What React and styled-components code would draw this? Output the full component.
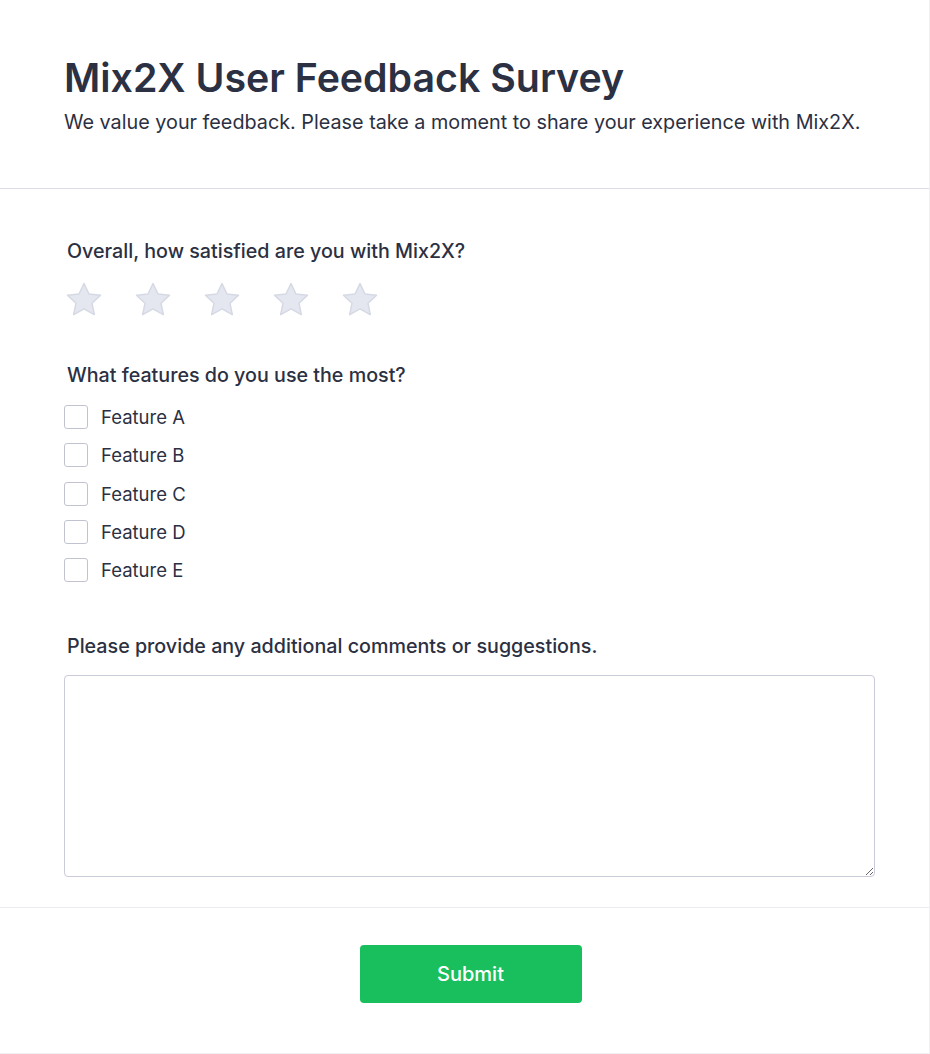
import React from 'react';
import styled, { createGlobalStyle } from 'styled-components';

const GlobalStyle = createGlobalStyle`
	* { box-sizing: border-box; }
	body {
		margin: 0;
		background: #ffffff;
		font-family: Inter, "Noto Sans", sans-serif;
		color: #2b3042;
	}
`;

const Card = styled.div`
	width: 930px;
	min-height: 1054px;
	background: #fff;
	border-right: 1px solid #f0f0f3;
	border-bottom: 1px solid #f0f0f3;
`;

const Header = styled.header`
	padding: 56px 40px 52px 64px;
	border-bottom: 1px solid #dcdde8;
`;

const Title = styled.h1`
	margin: 0;
	font-size: 39.3px;
	line-height: 44px;
	font-weight: 600;
	color: #2b3042;
`;

const Subtitle = styled.p`
	margin: 8px 0 0;
	font-size: 19.8px;
	line-height: 28px;
	white-space: nowrap;
	color: #2b3042;
`;

const Main = styled.main`
	padding: 48px 55px 30px 64px;
	border-bottom: 1px solid #ebebf0;
`;

const Question = styled.h2`
	margin: 0 0 ${(p) => p.gap || 16}px;
	padding-left: 3px;
	font-size: 19.7px;
	line-height: 28px;
	font-weight: 450;
	color: #2b3042;
`;

const Block = styled.section`
	margin-bottom: ${(p) => p.gap || 0}px;
`;

const Stars = styled.div`
	display: flex;
	gap: 29px;
	height: 40px;
	align-items: center;
`;

const StarButton = styled.button`
	border: none;
	background: none;
	padding: 0;
	width: 40px;
	height: 40px;
	cursor: pointer;
	display: flex;
	align-items: center;
	justify-content: center;
`;

const Options = styled.div`
	display: flex;
	flex-direction: column;
	gap: 14.3px;
`;

const Option = styled.label`
	display: flex;
	align-items: center;
	gap: 13px;
	height: 24px;
	font-size: 18.5px;
	color: #2b3042;
	cursor: pointer;
`;

const Box = styled.input`
	appearance: none;
	margin: 0;
	width: 24px;
	height: 24px;
	border: 1px solid #c1c4d0;
	border-radius: 3px;
	background: #fff;
`;

const Comments = styled.textarea`
	display: block;
	width: 811px;
	height: 202px;
	border: 1px solid #c9ccd8;
	border-radius: 4px;
	padding: 10px;
	font-family: inherit;
	font-size: 16px;
	resize: vertical;
`;

const Footer = styled.footer`
	display: flex;
	justify-content: center;
	padding: 37px 0 50px 12px;
`;

const Submit = styled.button`
	width: 222px;
	height: 58px;
	border: none;
	border-radius: 4px;
	background: #19be5d;
	color: #fff;
	font-family: inherit;
	font-size: 20px;
	font-weight: 500;
	cursor: pointer;
`;

const Star = () => (
	<svg width="40" height="40" viewBox="0 0 40 40">
		<polygon
			points="20,3.5 25,14 36.5,15.3 28,23.2 30.3,34.6 20,28.8 9.7,34.6 12,23.2 3.5,15.3 15,14"
			fill="#e4e7f0"
			stroke="#d6d9e4"
			strokeWidth="1.5"
			strokeLinejoin="round"
		/>
	</svg>
);

const features = ['Feature A', 'Feature B', 'Feature C', 'Feature D', 'Feature E'];

const App = () => {
	return (
		<>
			<GlobalStyle />
			<Card>
				<Header>
					<Title>Mix2X User Feedback Survey</Title>
					<Subtitle>We value your feedback. Please take a moment to share your experience with Mix2X.</Subtitle>
				</Header>
				<Main>
					<Block gap={41}>
						<Question gap={15}>Overall, how satisfied are you with Mix2X?</Question>
						<Stars>
							{[1, 2, 3, 4, 5].map((n) => (
								<StarButton key={n} aria-label={`${n} star`}>
									<Star />
								</StarButton>
							))}
						</Stars>
					</Block>
					<Block gap={50}>
						<Question gap={16}>What features do you use the most?</Question>
						<Options>
							{features.map((f) => (
								<Option key={f}>
									<Box type="checkbox" />
									{f}
								</Option>
							))}
						</Options>
					</Block>
					<Block>
						<Question gap={15}>Please provide any additional comments or suggestions.</Question>
						<Comments />
					</Block>
				</Main>
				<Footer>
					<Submit>Submit</Submit>
				</Footer>
			</Card>
		</>
	);
};

export default App;
